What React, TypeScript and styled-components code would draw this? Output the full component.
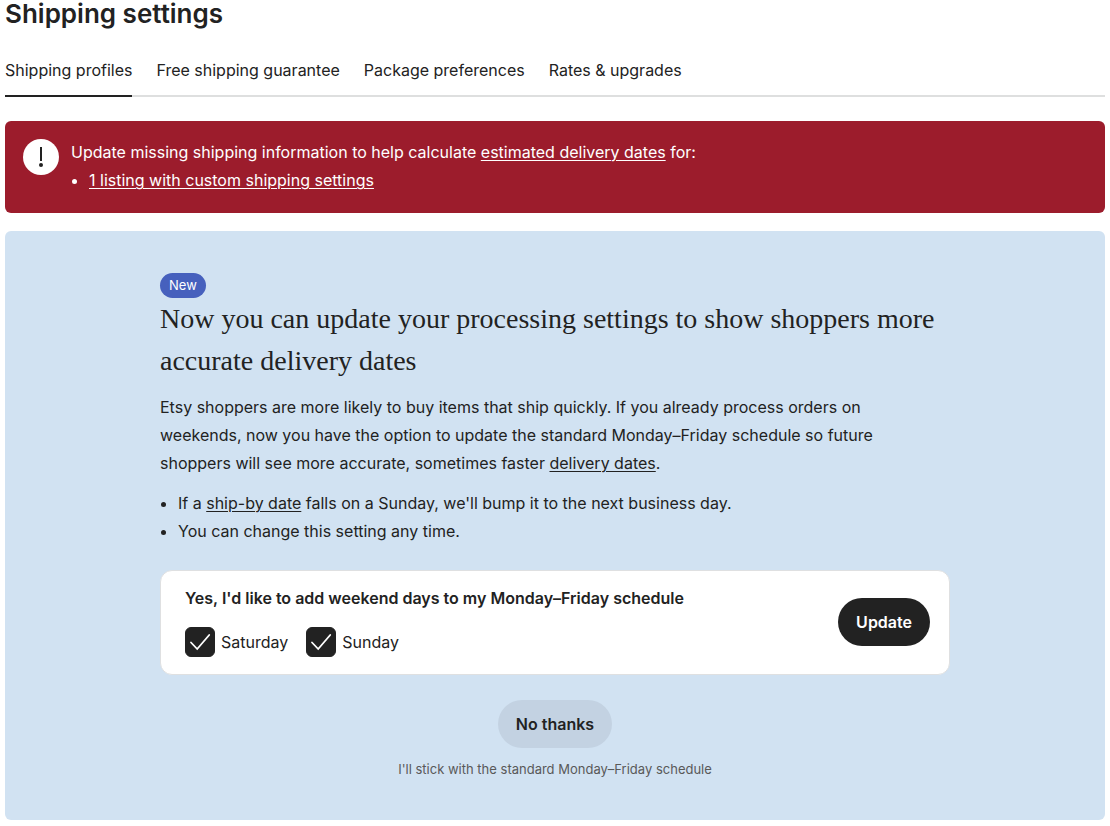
import React from "react";
import styled, { createGlobalStyle } from "styled-components";

const ink = "#222222";
const sans = `Inter, "Liberation Sans", sans-serif`;

const GlobalStyle = createGlobalStyle`
  *, *::before, *::after { box-sizing: border-box; }
  body {
    margin: 0;
    background: #ffffff;
    color: ${ink};
    font-family: ${sans};
    font-size: 16px;
    line-height: 28px;
  }
  h1, h2, p, ul, fieldset, legend { margin: 0; padding: 0; }
  fieldset { border: 0; min-width: 0; }
`;

const Page = styled.main`
  padding: 0 5px 6px;
`;

const Title = styled.h1`
  font-size: 26px;
  font-weight: 600;
  line-height: 28px;
`;

const Tabs = styled.nav`
  display: flex;
  gap: 24px;
  margin-top: 28px;
  box-shadow: inset 0 -2px 0 #dedfdf;
`;

const Tab = styled.a<{ $active?: boolean }>`
  padding: 0 0 11px;
  border-bottom: 2px solid ${(p) => (p.$active ? ink : "transparent")};
  color: ${ink};
  text-decoration: none;
  white-space: nowrap;
`;

const TextLink = styled.a`
  color: inherit;
  text-decoration: underline;
  text-decoration-thickness: 1px;
  text-underline-offset: 2px;
`;

const Alert = styled.section`
  display: flex;
  gap: 12px;
  margin-top: 24px;
  padding: 17px 18px 19px;
  border-radius: 6px;
  background: #9c1c2c;
  color: #ffffff;
`;

const AlertIcon = styled.svg`
  flex: none;
  width: 36px;
  height: 36px;
  margin-top: 1px;
`;

const Bullets = styled.ul`
  padding-left: 18px;
`;

const Promo = styled.section`
  margin-top: 18px;
  padding: 42px 24px;
  border-radius: 6px;
  background: #d1e2f2;
`;

const PromoBody = styled.div`
  display: flex;
  flex-direction: column;
  align-items: flex-start;
  max-width: 790px;
  margin: 0 auto;
`;

const Badge = styled.span`
  padding: 0 9px;
  border-radius: 13px;
  background: #4660bd;
  color: #ffffff;
  font-size: 13px;
  line-height: 25px;
`;

const Heading = styled.h2`
  font-family: "Liberation Serif", serif;
  font-size: 28px;
  font-weight: 400;
  line-height: 42px;
`;

const Copy = styled.p`
  max-width: 740px;
  margin: 11px 0 12px;
`;

const Card = styled.form`
  display: flex;
  align-items: center;
  justify-content: space-between;
  gap: 24px;
  width: 100%;
  margin-top: 25px;
  padding: 15px 19px 17px 24px;
  border: 1px solid #dfe0e1;
  border-radius: 12px;
  background: #ffffff;
`;

const CardTitle = styled.legend`
  font-weight: 600;
  line-height: 24px;
`;

const Choices = styled.div`
  display: flex;
  gap: 18px;
  margin-top: 17px;
`;

const Choice = styled.label`
  display: flex;
  align-items: center;
  gap: 6px;
`;

const CheckBox = styled.span`
  display: grid;
  width: 30px;
  height: 30px;
  > * { grid-area: 1 / 1; }
`;

const CheckInput = styled.input`
  appearance: none;
  width: 30px;
  height: 30px;
  margin: 0;
  border: 1px solid ${ink};
  border-radius: 6px;
  background: #ffffff;
  &:checked { background: ${ink}; }
`;

const CheckMark = styled.svg`
  width: 30px;
  height: 30px;
  pointer-events: none;
`;

const Button = styled.button<{ $quiet?: boolean }>`
  flex: none;
  height: 48px;
  padding: 0 18px;
  border: 0;
  border-radius: 24px;
  background: ${(p) => (p.$quiet ? "#c3d2e2" : ink)};
  color: ${(p) => (p.$quiet ? ink : "#ffffff")};
  font-family: inherit;
  font-size: 16px;
  font-weight: 600;
  cursor: pointer;
`;

const Decline = styled.div`
  display: flex;
  flex-direction: column;
  align-items: center;
  gap: 12px;
  width: 100%;
  margin-top: 25px;
`;

const Note = styled.p`
  color: #595959;
  font-size: 13px;
  line-height: 18px;
`;

function DayChoice({ day }: { day: string }) {
  return (
    <Choice>
      <CheckBox>
        <CheckInput type="checkbox" name={day.toLowerCase()} defaultChecked />
        <CheckMark viewBox="0 0 30 30" fill="none" aria-hidden="true">
          <path d="M6 15.5 12.2 22 24.2 8" stroke="#ffffff" strokeWidth="1.8" strokeLinecap="round" />
        </CheckMark>
      </CheckBox>
      {day}
    </Choice>
  );
}

export default function App() {
  return (
    <>
      <GlobalStyle />
      <Page>
        <Title>Shipping settings</Title>
        <Tabs aria-label="Shipping settings">
          <Tab href="#profiles" $active aria-current="page">Shipping profiles</Tab>
          <Tab href="#guarantee">Free shipping guarantee</Tab>
          <Tab href="#packages">Package preferences</Tab>
          <Tab href="#rates">Rates &amp; upgrades</Tab>
        </Tabs>
        <Alert>
          <AlertIcon viewBox="0 0 36 36" aria-hidden="true">
            <circle cx="18" cy="18" r="18" fill="#ffffff" />
            <path d="M18 8v14" stroke={ink} strokeWidth="2" />
            <circle cx="18" cy="26" r="2" fill={ink} />
          </AlertIcon>
          <div>
            <p>
              Update missing shipping information to help calculate{" "}
              <TextLink href="#dates">estimated delivery dates</TextLink> for:
            </p>
            <Bullets>
              <li><TextLink href="#listing">1 listing with custom shipping settings</TextLink></li>
            </Bullets>
          </div>
        </Alert>
        <Promo>
          <PromoBody>
            <Badge>New</Badge>
            <Heading>
              Now you can update your processing settings to show shoppers more accurate delivery dates
            </Heading>
            <Copy>
              Etsy shoppers are more likely to buy items that ship quickly. If you already process orders on
              weekends, now you have the option to update the standard Monday–Friday schedule so future
              shoppers will see more accurate, sometimes faster <TextLink href="#delivery">delivery dates</TextLink>.
            </Copy>
            <Bullets>
              <li>
                If a <TextLink href="#ship-by">ship-by date</TextLink> falls on a Sunday, we'll bump it to the next business day.
              </li>
              <li>You can change this setting any time.</li>
            </Bullets>
            <Card onSubmit={(e) => e.preventDefault()}>
              <fieldset>
                <CardTitle>Yes, I'd like to add weekend days to my Monday–Friday schedule</CardTitle>
                <Choices>
                  <DayChoice day="Saturday" />
                  <DayChoice day="Sunday" />
                </Choices>
              </fieldset>
              <Button type="submit">Update</Button>
            </Card>
            <Decline>
              <Button type="button" $quiet>No thanks</Button>
              <Note>I'll stick with the standard Monday–Friday schedule</Note>
            </Decline>
          </PromoBody>
        </Promo>
      </Page>
    </>
  );
}
